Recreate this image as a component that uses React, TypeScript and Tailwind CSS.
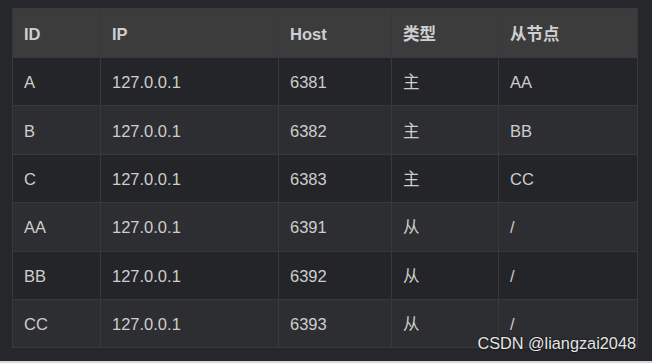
const rows = [
  ["A", "127.0.0.1", "6381", "主", "AA"],
  ["B", "127.0.0.1", "6382", "主", "BB"],
  ["C", "127.0.0.1", "6383", "主", "CC"],
  ["AA", "127.0.0.1", "6391", "从", "/"],
  ["BB", "127.0.0.1", "6392", "从", "/"],
  ["CC", "127.0.0.1", "6393", "从", "/"],
]

const heads = ["ID", "IP", "Host", "类型", "从节点"]
const widths = ["w-[88px]", "w-[178px]", "w-[113px]", "w-[107px]", "w-[139px]"]

export default function App() {
  return (
    <div
      className="relative w-[652px] h-[363px] bg-[#26272a] overflow-hidden"
      style={{ fontFamily: '"Liberation Sans", "Noto Sans CJK SC", sans-serif' }}
    >
      <div className="pl-[12px] pt-[8px]">
        <table className="border-collapse table-fixed w-[625px] text-[16.5px] text-[#cdcdcd]">
          <thead>
            <tr className="bg-[#3c3c3d]">
              {heads.map((h, i) => (
                <th
                  key={h}
                  className={`${widths[i]} h-[49px] border border-[#38393b] px-[11px] pt-[2px] text-left font-bold text-[#cfcfcf]`}
                >
                  {h}
                </th>
              ))}
            </tr>
          </thead>
          <tbody>
            {rows.map((r, ri) => (
              <tr key={ri} className={ri % 2 === 0 ? "bg-[#242528]" : "bg-[#2d2e31]"}>
                {r.map((c, ci) => (
                  <td key={ci} className="h-[48.4px] border border-[#38393b] px-[11px] pt-[2px]">
                    {c}
                  </td>
                ))}
              </tr>
            ))}
          </tbody>
        </table>
      </div>
      <div className="absolute right-[16px] bottom-[8px] text-[16.3px] text-[#e6e6e6] [text-shadow:0_0_2px_#000]">
        CSDN @liangzai2048
      </div>
      <div className="absolute left-0 right-0 bottom-0 h-[2px] bg-[#d9d9d9]" />
    </div>
  )
}
